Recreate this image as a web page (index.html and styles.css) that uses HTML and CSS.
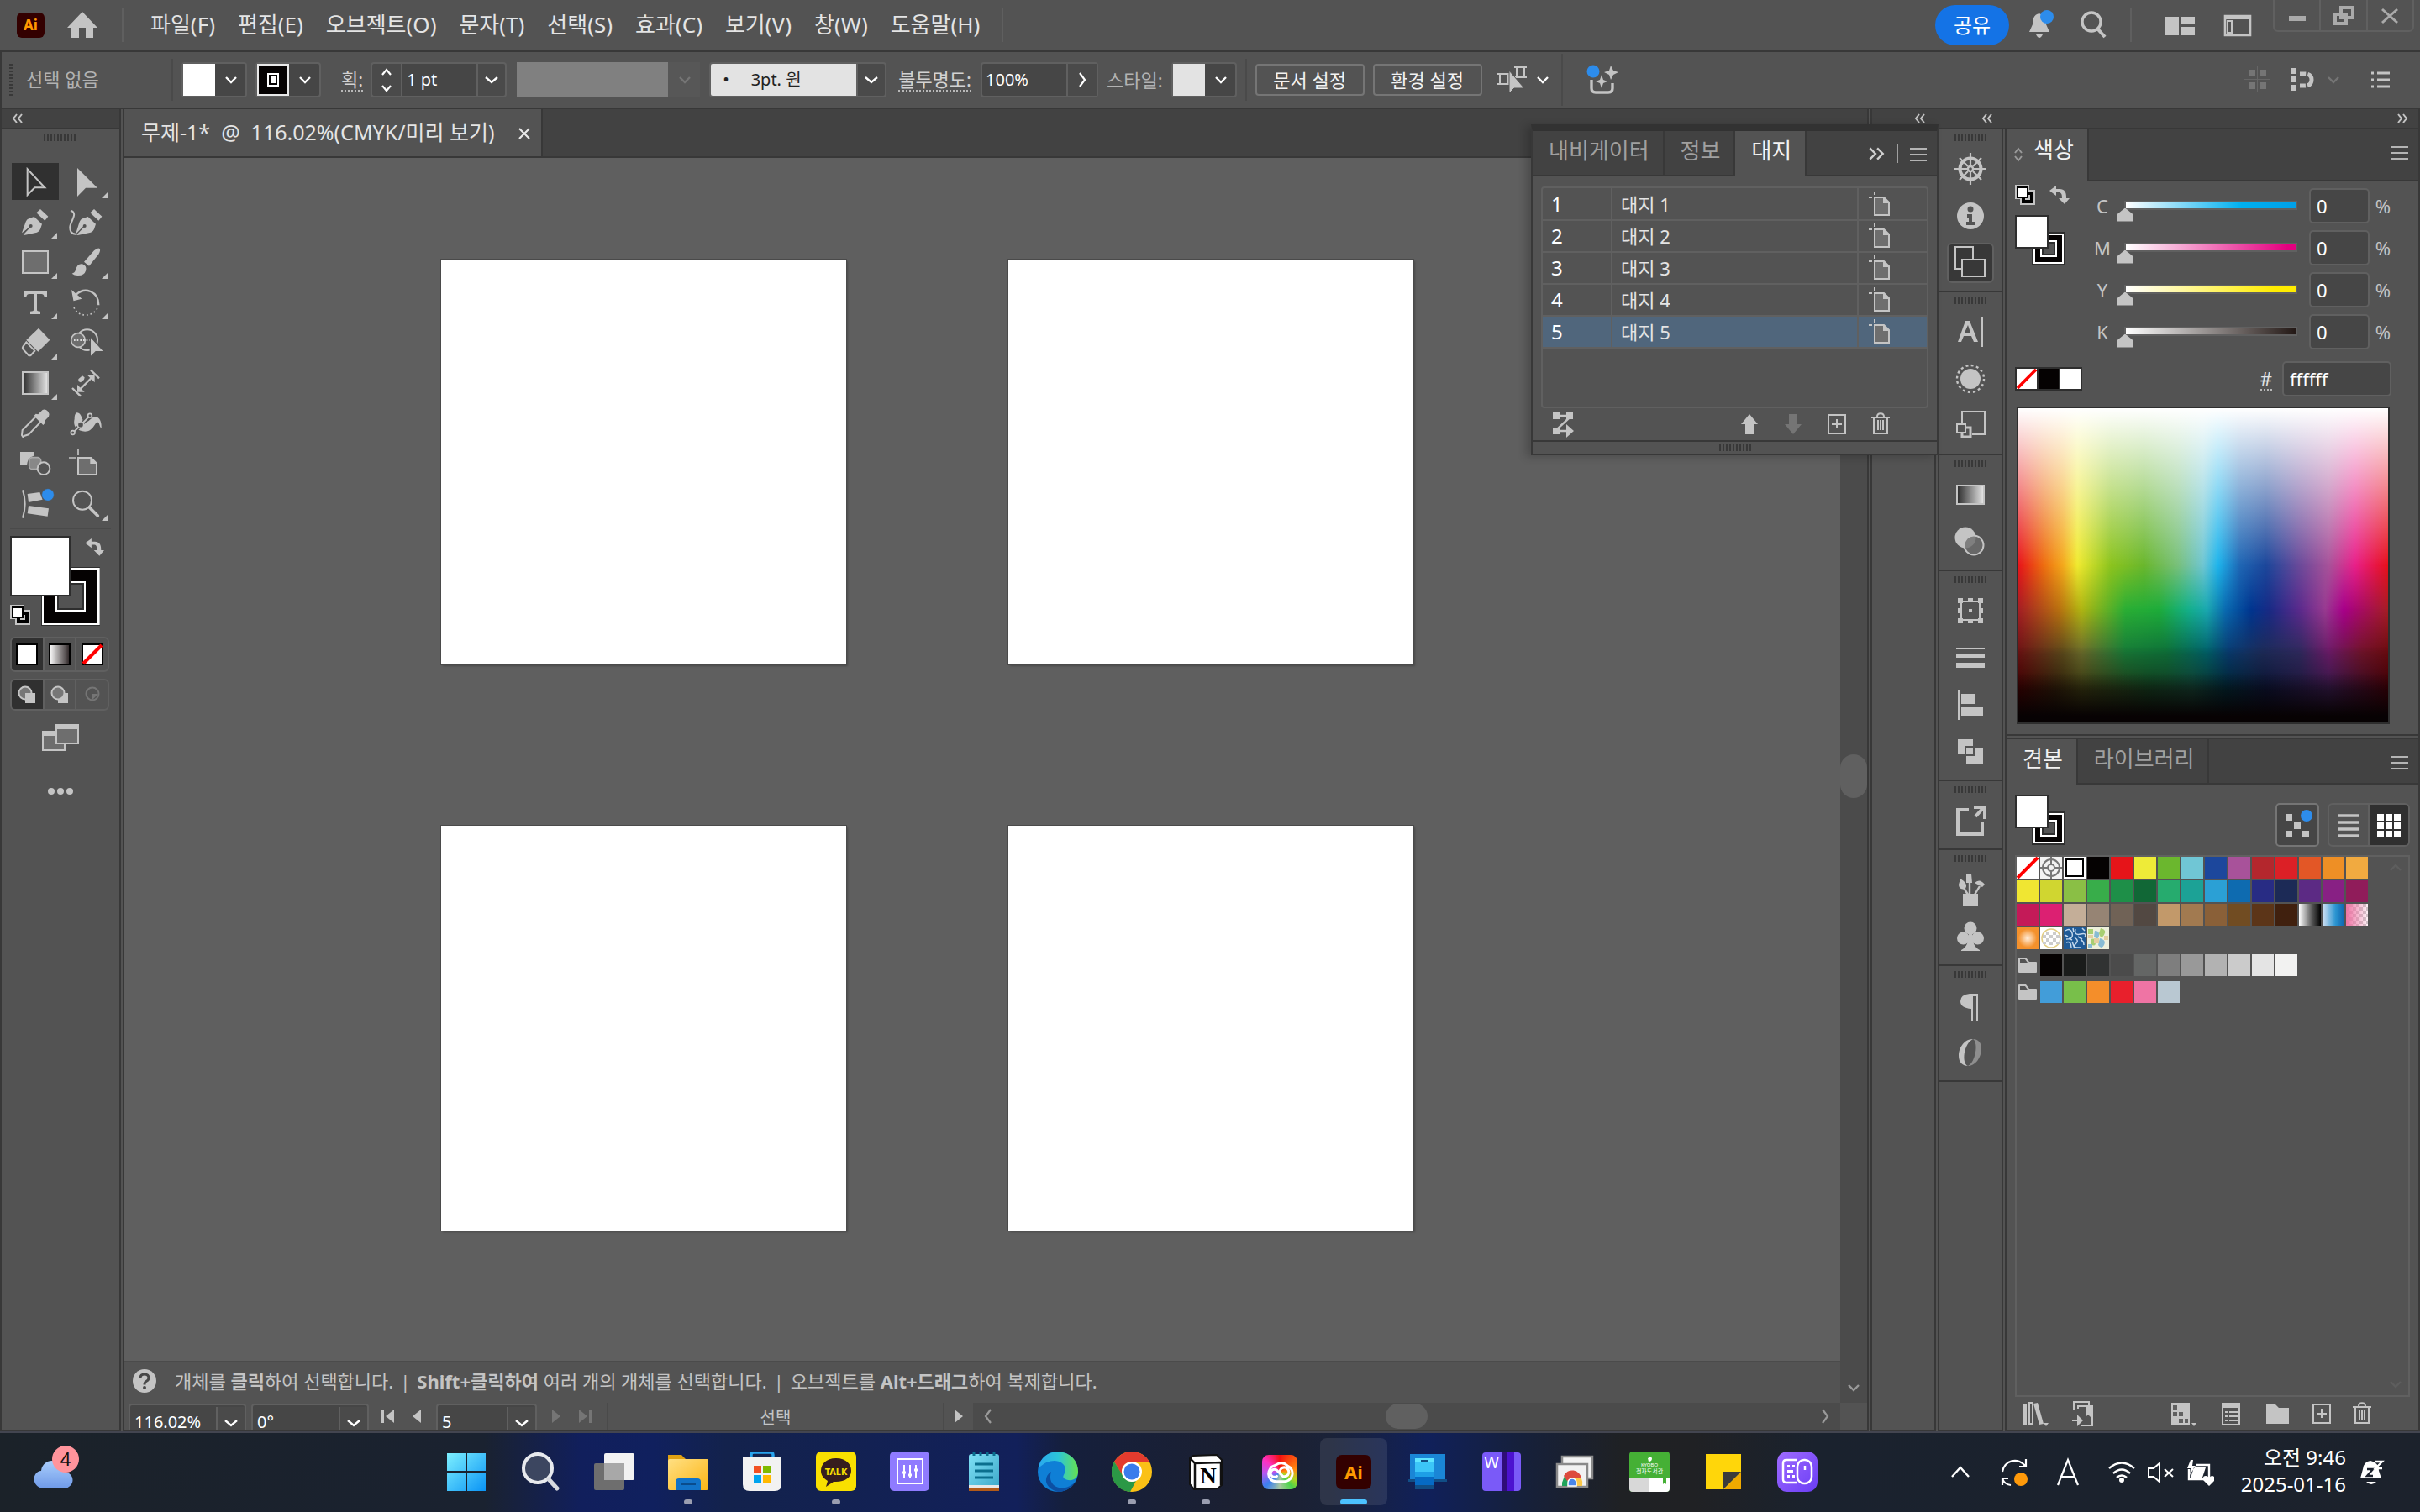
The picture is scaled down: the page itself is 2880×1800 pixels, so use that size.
FILE: index.html
```html
<!DOCTYPE html>
<html lang="ko">
<head>
<meta charset="utf-8">
<title>무제-1* - Illustrator</title>
<link rel="stylesheet" href="styles.css">
</head>
<body>
<svg class="sprite" aria-hidden="true">
  <defs>
    <linearGradient id="gw"><stop offset="0" stop-color="#2a2a2a"/><stop offset="1" stop-color="#e8e8e8"/></linearGradient>
    <linearGradient id="gb"><stop offset="0" stop-color="#fff"/><stop offset="1" stop-color="#2a2223"/></linearGradient>
    <linearGradient id="win" x2="1" y2="1"><stop offset="0" stop-color="#7df0ff"/><stop offset="1" stop-color="#0a94f5"/></linearGradient>
    <linearGradient id="fold" x2="1" y2="1"><stop offset="0" stop-color="#ffe083"/><stop offset="1" stop-color="#fdb515"/></linearGradient>
    <linearGradient id="cloud" x2="0" y2="1"><stop offset="0" stop-color="#a9cdfb"/><stop offset="1" stop-color="#6f9ae8"/></linearGradient>
    <linearGradient id="edge" x2="1"><stop offset="0" stop-color="#2aa8ee"/><stop offset=".5" stop-color="#2cc5d8"/><stop offset="1" stop-color="#66e24f"/></linearGradient>
    <linearGradient id="pur" x2="1" y2="1"><stop offset="0" stop-color="#a06cff"/><stop offset="1" stop-color="#6a3df5"/></linearGradient>
    <linearGradient id="note" x2="1" y2="1"><stop offset="0" stop-color="#7fe0f5"/><stop offset="1" stop-color="#3aa6c8"/></linearGradient>
  </defs>
  <symbol id="down" viewBox="0 0 20 20"><path d="M4 7l6 6 6-6" fill="none" stroke="currentColor" stroke-width="2.4"/></symbol>
  <symbol id="right" viewBox="0 0 20 20"><path d="M7 2l6 8-6 8" fill="none" stroke="currentColor" stroke-width="2.2"/></symbol>
  <symbol id="dbl-right" viewBox="0 0 20 20"><path d="M3 4l6 6-6 6M11 4l6 6-6 6" fill="none" stroke="currentColor" stroke-width="2.2"/></symbol>
  <symbol id="dbl-left" viewBox="0 0 14 14"><path d="M6 2L2 7l4 5M12 2L8 7l4 5" fill="none" stroke="currentColor" stroke-width="2"/></symbol>
  <symbol id="menu" viewBox="0 0 20 16"><path d="M0 1h20M0 8h20M0 15h20" stroke="currentColor" stroke-width="2"/></symbol>
  <symbol id="swap" viewBox="0 0 24 24"><path d="M8 1v4h4c6 0 8 4 8 9v2h4l-6 7-7-7h4c0-5-1-7-4-7H8v4L0 7z" fill="#c4c4c4"/></symbol>
  <symbol id="defcol" viewBox="0 0 24 24"><path d="M0 0h17v6h7v18H6v-7H0z" fill="#c4c4c4"/><path d="M8 8h14v14H8z"/><path d="M12 12h6v6h-6z" fill="#c4c4c4"/><path d="M2 2h14v14H2z"/><path d="M4 4h10v10H4z" fill="#fff"/></symbol>
  <symbol id="trash" viewBox="0 0 24 28"><path d="M1 6h22M8 5c0-5 8-5 8 0M4 6v19h16V6M9 9v12M12 9v12M15 9v12" fill="none" stroke="#c4c4c4" stroke-width="2"/></symbol>
  <symbol id="plus" viewBox="0 0 24 28"><path d="M2 3h20v22H2zM12 8v11M6 14h12" fill="none" stroke="#c4c4c4" stroke-width="2"/></symbol>
  <symbol id="board" viewBox="0 0 26 30"><path d="M7 0v4M0 7h4" stroke="#c4c4c4" stroke-width="2"/><path d="M7 7h11l6 6v15H7z" fill="#6e6e6e" stroke="#c4c4c4" stroke-width="2"/><path d="M17 6v8h8z" fill="#c4c4c4"/></symbol>
  <symbol id="folder" viewBox="0 0 26 26"><path d="M2 5q0-1 1-1h8l4 5h8q1 0 1 1v11q0 1-1 1H3q-1 0-1-1z" fill="#c4c4c4"/><path d="M4 6h6l3 4H4z" fill="#535353"/></symbol>
  <symbol id="nopaint" viewBox="0 0 26 26"><path d="M0 0h26v26H0z" fill="#fff"/><path d="M1 25L25 1" stroke="#f00" stroke-width="4"/></symbol>
</svg>

<header class="menubar">
  <span class="ai-logo">Ai</span>
  <button class="home" aria-label="홈"><svg viewBox="0 0 36 32"><path d="M18 0l18 19h-5v12h-9V19h-8v12H5V19H0z" fill="#c4c4c4"/></svg></button>
  <nav class="menus">
    <button>파일(F)</button><button>편집(E)</button><button>오브젝트(O)</button><button>문자(T)</button><button>선택(S)</button><button>효과(C)</button><button>보기(V)</button><button>창(W)</button><button>도움말(H)</button>
  </nav>
  <div class="menu-right">
    <button class="share">공유</button>
    <button class="ic bell" aria-label="알림"><svg viewBox="0 0 32 36"><path d="M14 4c-7 1-8 8-8 13L2 26h24l-4-9V9z" fill="#c4c4c4"/><path d="M10 29h8q-4 8-8 0z" fill="#c4c4c4"/><circle cx="23" cy="8" r="8" fill="#2d8ceb"/></svg></button>
    <button class="ic" aria-label="검색"><svg viewBox="0 0 32 36"><circle cx="14" cy="14" r="11" fill="none" stroke="#c4c4c4" stroke-width="3.4"/><path d="M21 22l9 10" stroke="#c4c4c4" stroke-width="4"/></svg></button>
    <i class="vline"></i>
    <button class="ic" aria-label="작업 영역"><svg viewBox="0 0 36 36"><path d="M0 8h16v22H0zM18 8h17v9H18zM18 20h17v10H18z" fill="#c4c4c4"/></svg></button>
    <button class="ic" aria-label="패널"><svg viewBox="0 0 36 36"><path d="M3 7h30v23H3z" fill="none" stroke="#c4c4c4" stroke-width="2.6"/><path d="M2 6h32v5H2z" fill="#c4c4c4"/><path d="M6 13h5v14H6z" fill="none" stroke="#c4c4c4" stroke-width="2"/></svg></button>
    <div class="winbtns">
      <button aria-label="최소화"><svg viewBox="0 0 30 30"><path d="M5 16h20v6H5z" fill="#aaa"/></svg></button>
      <button aria-label="복원"><svg viewBox="0 0 30 30"><path d="M12 6h14v12H12zM5 14h13v11H5z" fill="none" stroke="#aaa" stroke-width="4"/></svg></button>
      <button aria-label="닫기"><svg viewBox="0 0 30 30"><path d="M6 8l18 16M24 8L6 24" stroke="#aaa" stroke-width="3"/></svg></button>
    </div>
  </div>
</header>

<section class="controlbar">
  <i class="dots"></i>
  <span class="sel-none">선택 없음</span>
  <i class="vdiv"></i>
  <button class="pick" aria-label="칠"><i class="chip white"></i><svg><use href="#down"/></svg></button>
  <button class="pick" aria-label="획 색"><i class="chip stroke"></i><svg><use href="#down"/></svg></button>
  <label class="lbl under" for="sw">획:</label>
  <div class="spin"><span class="arrows"><svg viewBox="0 0 20 32"><path d="M5 10l5-6 5 6M5 23l5 6 5-6" fill="none" stroke="#fff" stroke-width="2.2"/></svg></span><select id="sw" class="combo w-pt"><option>1 pt</option></select></div>
  <div class="profile"><svg><use href="#down"/></svg></div>
  <select class="combo w-brush" aria-label="브러쉬"><option>•&nbsp;&nbsp;&nbsp;&nbsp; 3pt. 원</option></select>
  <label class="lbl under" for="op">불투명도:</label>
  <div class="opacity"><input id="op" value="100%"><button aria-label="더 보기"><svg><use href="#right"/></svg></button></div>
  <span class="lbl dim">스타일:</span>
  <button class="pick" aria-label="스타일"><i class="chip pale"></i><svg><use href="#down"/></svg></button>
  <i class="vdiv"></i>
  <button class="outline">문서 설정</button>
  <button class="outline">환경 설정</button>
  <button class="ic simil" aria-label="유사 항목"><svg viewBox="0 0 36 36"><path d="M3 11h10v12H3zM23 3h9v12h-9zM0 11h3M0 23h3M20 3h15M20 15h15" fill="none" stroke="#c4c4c4" stroke-width="2"/><path d="M14 7v27l6-6h12z" fill="#c4c4c4" stroke="#535353" stroke-width="1"/></svg><svg class="sm"><use href="#down"/></svg></button>
  <i class="vdiv tall"></i>
  <button class="ic gen" aria-label="생성"><svg viewBox="0 0 40 36"><path d="M6 18v10q0 5 5 5h15q5 0 5-5v-6" fill="none" stroke="#c4c4c4" stroke-width="3.4"/><path d="M29 1l3 6 6 2-6 3-3 6-2-6-6-3 6-2zM18 12l2 6 5 2-5 2-2 6-2-6-5-2 5-2z" fill="#c4c4c4"/><circle cx="8" cy="8" r="7.500" fill="#2d8ceb"/></svg></button>
  <div class="ctl-right">
    <svg class="dim" viewBox="0 0 32 32"><path d="M5 4h8v8H5zM18 4h8v8h-8zM5 19h8v8H5zM18 19h8v8h-8z" fill="#757575"/><path d="M0 15h31v1H0zM15 0h1v31h-1z" fill="#666"/></svg>
    <svg viewBox="0 0 32 32"><path d="M3 2h7v7H3zM3 12h7v7H3zM3 22h7v7H3z" fill="#c4c4c4"/><path d="M14 9h6q8 0 8 7t-8 7h-6" fill="none" stroke="#c4c4c4" stroke-width="5" stroke-dasharray="7 2 18 2"/></svg>
    <svg class="sm dimc"><use href="#down"/></svg>
    <svg class="lst" viewBox="0 0 24 24"><path d="M1 4h3M1 12h3M1 20h3M8 4h15M8 12h15M8 20h15" stroke="#c4c4c4" stroke-width="3"/></svg>
  </div>
</section>

<main class="work">
  <aside class="tools">
    <div class="strip-head left"><svg><use href="#dbl-left"/></svg></div>
    <i class="grip"></i>
    <div class="toolgrid">
      <button class="on" aria-label="선택"><svg viewBox="36 216 180 144"><path d="M98 244v92l26-26h36z" fill="none" stroke="#c4c4c4" stroke-width="6"/></svg></button>
      <button class="fly" aria-label="직접 선택"><svg viewBox="216 216 180 144"><path d="M276 240v102l30-31h42z" fill="#c4c4c4"/></svg></button>
      <button class="fly" aria-label="펜"><svg viewBox="36 360 180 144"><path d="M78 472l14-40q3-9 12-12l18-6 28 26-6 18q-3 9-12 12l-46 10-4-4 26-26" fill="#c4c4c4"/><path d="M82 476l26-27" stroke="#535353" stroke-width="4"/><circle cx="110" cy="447" r="6" fill="#535353"/><path d="M130 400l14-13 28 26-12 15z" fill="#c4c4c4"/></svg></button>
      <button aria-label="곡률"><svg viewBox="216 360 180 144"><path d="M252 392c28 8 0 38-2 58-1 14 4 26 20 26" fill="none" stroke="#c4c4c4" stroke-width="6"/><path d="M270 476l14-44q3-9 12-12l18-6 28 26-6 18q-3 9-12 12l-46 10z" fill="#c4c4c4"/><path d="M273 476l26-27" stroke="#535353" stroke-width="4"/><circle cx="302" cy="447" r="6" fill="#535353"/><path d="M322 400l14-13 28 26-12 15z" fill="#c4c4c4"/></svg></button>
      <button class="fly" aria-label="사각형"><svg viewBox="36 504 180 144"><path d="M81 537h90v78H81z" fill="#6e6e6e" stroke="#c4c4c4" stroke-width="6"/></svg></button>
      <button class="fly" aria-label="브러쉬"><svg viewBox="216 504 180 144"><path d="M356 528q4 6-4 20l-34 42-18-15 36-40q14-12 20-7z" fill="#c4c4c4"/><path d="M294 583q16 6 13 22-6 20-30 19-12 0-20-7 10-2 13-13 6-24 24-21z" fill="#c4c4c4"/></svg></button>
      <button class="fly" aria-label="문자"><svg viewBox="36 648 180 144"><path d="M84 678h84v22h-10q-2-10-10-10h-16v58q0 4 12 4v10h-36v-10q12 0 12-4v-58h-16q-8 0-10 10H84z" fill="#c4c4c4"/></svg></button>
      <button class="fly" aria-label="회전"><svg viewBox="216 648 180 144"><path d="M272 692c30-28 80-14 80 38" fill="none" stroke="#c4c4c4" stroke-width="7"/><path d="M258 680l30 26-24 6z" fill="#c4c4c4" stroke="#c4c4c4" stroke-width="4"/><path d="M264 738c14 36 68 36 84 2" fill="none" stroke="#c4c4c4" stroke-width="5" stroke-dasharray="5 9"/></svg></button>
      <button class="fly" aria-label="지우개"><svg viewBox="36 792 180 144"><path d="M138 812l40 42-42 42-42-42z" fill="#c4c4c4"/><path d="M94 862l30 31-14 16q-4 2-8 0l-20-22q-3-5 0-9z" fill="none" stroke="#c4c4c4" stroke-width="6"/></svg></button>
      <button aria-label="도형 구성"><svg viewBox="216 792 180 144"><circle cx="311" cy="854" r="37" fill="none" stroke="#c4c4c4" stroke-width="6"/><circle cx="279" cy="855" r="25" fill="#6e6e6e" stroke="#c4c4c4" stroke-width="5"/><path d="M264 855h64" stroke="#fff" stroke-width="5" stroke-dasharray="5 6"/><path d="M322 842v74l20-20h30z" fill="#c4c4c4" stroke="#535353" stroke-width="4"/></svg></button>
      <button class="fly" aria-label="그레이디언트"><svg viewBox="36 936 180 144"><path d="M81 969h90v78H81z" fill="url(#gw)" stroke="#c4c4c4" stroke-width="6"/></svg></button>
      <button aria-label="치수"><svg viewBox="216 936 180 144"><path d="M258 1026l30 29M324 962l30 29M286 1030l40-40" stroke="#c4c4c4" stroke-width="7"/><path d="M276 1040v-26l26 26zM338 978v28l-28-28zM280 994l14-12 8 6-2 8-12 10-8-4z" fill="#c4c4c4"/></svg></button>
      <button aria-label="스포이드"><svg viewBox="36 1080 180 144"><path d="M128 1128l18 18-44 46-14 4-6 4-4-6 2-18z" fill="none" stroke="#c4c4c4" stroke-width="6"/><path d="M122 1124l6-6 8 2 16-16q10-4 20 6 6 8 2 18l-14 14 2 8-8 8z" fill="#c4c4c4"/></svg></button>
      <button aria-label="퍼펫 뒤틀기"><svg viewBox="216 1080 180 144"><path d="M266 1136c0-36 22-22 26-4 4 14 16 20 28 8 20-22 44-12 42 30-8-6-6-24-16-22-8 2-16 40-52 32-22-4-34-20-28-44z" fill="#c4c4c4"/><path d="M262 1184l60-60" stroke="#535353" stroke-width="14"/><path d="M262 1184l60-60" stroke="#c4c4c4" stroke-width="6"/><circle cx="260" cy="1185" r="7" fill="#535353" stroke="#c4c4c4" stroke-width="5"/><circle cx="288" cy="1157" r="11" fill="#535353" stroke="#c4c4c4" stroke-width="5"/><circle cx="321" cy="1124" r="7" fill="#535353" stroke="#c4c4c4" stroke-width="5"/></svg></button>
      <button aria-label="블렌드"><svg viewBox="36 1224 180 144"><path d="M72 1254h48v14q-22 6-24 34H72z" fill="#c4c4c4"/><rect x="104" y="1274" width="42" height="42" rx="12" fill="#888" stroke="#aaa" stroke-width="5"/><circle cx="156" cy="1313" r="22" fill="#535353" stroke="#c4c4c4" stroke-width="6"/></svg></button>
      <button aria-label="대지"><svg viewBox="216 1224 180 144"><path d="M279 1242v24M246 1275h24" stroke="#c4c4c4" stroke-width="5"/><path d="M279 1275h46l20 20v40h-66z" fill="#6e6e6e" stroke="#c4c4c4" stroke-width="6"/><path d="M322 1272v24h26z" fill="#c4c4c4"/></svg></button>
      <button aria-label="교차"><svg viewBox="36 1368 180 144"><path d="M81 1390q16 48 0 100" fill="none" stroke="#c4c4c4" stroke-width="6"/><path d="M98 1404l44-6 10 26-50 10zM102 1446l72 10-4 28-72-10z" fill="#c4c4c4"/><circle cx="171" cy="1407" r="22" fill="#2d8ceb" stroke="#535353" stroke-width="2"/></svg></button>
      <button class="fly" aria-label="돋보기"><svg viewBox="216 1368 180 144"><circle cx="294" cy="1427" r="33" fill="none" stroke="#c4c4c4" stroke-width="6"/><path d="M319 1452l30 30" stroke="#c4c4c4" stroke-width="11" stroke-linecap="round"/></svg></button>
    </div>
    <div class="colors">
      <svg viewBox="36 228 360 336"><path d="M147 345h210v210H147z" fill="#2e2e2e"/><path d="M150 348h206v204H150z" fill="#fff"/><path d="M156 354h192v192H156z" fill="#050202"/><path d="M198 396h108v108H198z" fill="#fff"/><path d="M204 402h96v96h-96z" fill="#2e2e2e"/><path d="M210 408h84v84h-84z" fill="#535353"/><path d="M36 234h216v216H36z" fill="#2e2e2e"/><path d="M42 240h204v204H42z" fill="#fff"/><use href="#swap" x="303" y="240" width="70" height="68"/><use href="#defcol" x="36" y="480" width="72" height="72"/></svg>
    </div>
    <div class="seg c1">
      <button class="on" aria-label="색상"><svg viewBox="0 0 26 26"><path d="M1 1h24v24H1z" fill="#fff" stroke="#000" stroke-width="2"/></svg></button>
      <button aria-label="그레이디언트"><svg viewBox="0 0 26 26"><path d="M1 1h24v24H1z" fill="url(#gb)" stroke="#000" stroke-width="2"/></svg></button>
      <button aria-label="없음"><svg viewBox="0 0 26 26"><path d="M1 1h24v24H1z" fill="#fff" stroke="#000" stroke-width="2"/><path d="M2 24L24 2" stroke="#f00" stroke-width="4"/></svg></button>
    </div>
    <div class="seg c2">
      <button class="on" aria-label="표준 그리기"><svg viewBox="0 0 22 22"><circle cx="9" cy="9" r="7.500" fill="#777" stroke="#c4c4c4" stroke-width="2"/><path d="M9 9h12v12H9z" fill="#c4c4c4"/></svg></button>
      <button aria-label="배경 그리기"><svg viewBox="0 0 22 22"><path d="M9 9h12v12H9z" fill="#c4c4c4"/><circle cx="9" cy="9" r="7.500" fill="#777" stroke="#c4c4c4" stroke-width="2"/></svg></button>
      <button aria-label="내부 그리기"><svg viewBox="0 0 22 22"><circle cx="11" cy="10" r="7.500" fill="none" stroke="#757575" stroke-width="2"/><path d="M11 10h7l-7 7z" fill="#757575"/></svg></button>
    </div>
    <button class="screen" aria-label="화면 모드"><svg viewBox="0 0 44 32"><path d="M1 9h26v22H1z" fill="#6e6e6e" stroke="#c4c4c4" stroke-width="2"/><path d="M0 8h17v6H0z" fill="#c4c4c4"/><path d="M17 1h26v22H17z" fill="#6e6e6e" stroke="#c4c4c4" stroke-width="2"/><path d="M16 0h28v6H16z" fill="#c4c4c4"/></svg></button>
    <button class="more" aria-label="도구 모음 편집"><svg viewBox="0 0 30 8"><circle cx="4" cy="4" r="4"/><circle cx="15" cy="4" r="4"/><circle cx="26" cy="4" r="4"/></svg></button>
  </aside>

  <section class="doc">
    <div class="tabs"><div class="doctab"><span>무제-1*&nbsp; @&nbsp; 116.02%(CMYK/미리 보기)</span><button aria-label="탭 닫기"><svg viewBox="0 0 14 14"><path d="M1 1l12 12M13 1L1 13" stroke="#e8e8e8" stroke-width="2.2"/></svg></button></div></div>
    <div class="docbody">
      <div class="canvascol">
        <div class="canvas"><i></i><i></i><i></i><i></i></div>
        <p class="hint"><svg viewBox="0 0 28 28"><circle cx="14" cy="14" r="14" fill="#c4c4c4"/><path d="M9 10.500q0-4.500 5-4.500t5 4.500q0 2.500-3 4-2 1-2 4" fill="none" stroke="#484848" stroke-width="3"/><circle cx="14" cy="22" r="2" fill="#484848"/></svg><span>개체를 <b>클릭</b>하여 선택합니다.</span><span>|</span><span><b>Shift+클릭하여</b> 여러 개의 개체를 선택합니다.</span><span>|</span><span>오브젝트를 <b>Alt+드래그</b>하여 복제합니다.</span></p>
      </div>
      <div class="vscroll"><i class="thumb"></i><svg><use href="#down"/></svg></div>
    </div>
    <div class="status">
      <select class="combo w-zoom" aria-label="확대"><option>116.02%</option></select>
      <select class="combo w-zoom" aria-label="회전"><option>0°</option></select>
      <button class="nav" aria-label="처음"><svg viewBox="0 0 20 20"><path d="M2 2h3v16H2zM17 2v16L7 10z"/></svg></button>
      <button class="nav" aria-label="이전"><svg viewBox="0 0 20 20"><path d="M15 2v16L5 10z"/></svg></button>
      <select class="combo w-page" aria-label="대지 탐색"><option>5</option></select>
      <button class="nav off" aria-label="다음"><svg viewBox="0 0 20 20"><path d="M5 2v16l10-8z"/></svg></button>
      <button class="nav off" aria-label="마지막"><svg viewBox="0 0 20 20"><path d="M15 2h3v16h-3zM3 2v16l10-8z"/></svg></button>
      <span class="toolname">선택</span>
      <button class="nav play" aria-label="상태 메뉴"><svg viewBox="0 0 20 20"><path d="M5 2v16l10-8z"/></svg></button>
      <div class="hscroll"><svg class="flip"><use href="#right"/></svg><i class="thumb"></i><svg><use href="#right"/></svg></div>
    </div>
  </section>

  <section class="side">
    <div class="strip-head heads"><svg><use href="#dbl-left"/></svg><svg><use href="#dbl-left"/></svg><svg class="flip"><use href="#dbl-left"/></svg></div>
    <div class="cols">
      <div class="col empty"></div>
      <div class="col dock">
        <div class="grp"><i class="grip"></i>
          <button aria-label="내비게이터"><svg viewBox="-28 -28 56 56"><g fill="none" stroke="#c4c4c4"><circle r="12.500" stroke-width="4"/><circle r="3" stroke-width="2.400"/><path d="M0-19V-4M0 4V19M-19 0H-4M4 0H19M-13-13L-3-3M13-13L3-3M-13 13l10-10M13 13L3 3" stroke-width="2.200"/></g></svg></button>
          <button aria-label="정보"><svg viewBox="-28 -28 56 56"><circle r="16" fill="#c4c4c4"/><circle cy="-8" r="3.500" fill="#535353"/><path d="M-4-2h6v9h3v4H-5V7h3V2h-2z" fill="#535353"/></svg></button>
          <button class="on" aria-label="대지"><svg viewBox="-28 -28 56 56"><path d="M-9 7h-9v-26H3v15" fill="none" stroke="#c4c4c4" stroke-width="2"/><path d="M-10-4h27v20h-27z" fill="none" stroke="#c4c4c4" stroke-width="2"/></svg></button></div>
        <div class="grp"><i class="grip"></i>
          <button aria-label="문자"><svg viewBox="-28 -28 56 56"><path d="M-15 12L-6-13h5L9 12H4L1 5h-9l-3 7zM-7 1h7l-3-9zM13-18h2v36h-2z" fill="#c4c4c4" fill-rule="evenodd"/></svg></button>
          <button aria-label="모양"><svg viewBox="-28 -28 56 56"><circle r="12" fill="#c4c4c4"/><circle r="16" fill="none" stroke="#c4c4c4" stroke-width="2.400" stroke-dasharray="3 3.300"/></svg></button>
          <button aria-label="에셋"><svg viewBox="-28 -28 56 56"><path d="M-10-2v-15h27v27H2" fill="none" stroke="#c4c4c4" stroke-width="2"/><path d="M-16-2h10V8h-10z" fill="#535353" stroke="#c4c4c4" stroke-width="2"/><path d="M-10 8v5H0V2h-5" fill="none" stroke="#c4c4c4" stroke-width="3"/></svg></button></div>
        <div class="grp"><i class="grip"></i>
          <button aria-label="그레이디언트"><svg viewBox="-28 -28 56 56"><path d="M-16-11h32v22h-32z" fill="url(#gw)" stroke="#c4c4c4" stroke-width="2"/></svg></button>
          <button aria-label="투명도"><svg viewBox="-28 -28 56 56"><circle cx="-6" cy="-5" r="12.500" fill="#c4c4c4"/><circle cx="4" cy="4" r="11.500" fill="#6e6e6e" fill-opacity=".8" stroke="#c4c4c4" stroke-width="2"/></svg></button></div>
        <div class="grp"><i class="grip"></i>
          <button aria-label="변형"><svg viewBox="-28 -28 56 56"><path d="M-11-11h22v22h-22z" fill="none" stroke="#c4c4c4" stroke-width="2"/><path d="M-15-15h6v6h-6zM-3-15h6v4h-6zM9-15h6v6H9zM-15-3h4v6h-4zM11-3h4v6h-4zM-15 9h6v6h-6zM-3 11h6v4h-6zM9 9h6v6H9zM-2-2h4v4h-4z" fill="#c4c4c4"/></svg></button>
          <button aria-label="획"><svg viewBox="-28 -28 56 56"><path d="M-17-12h34v2h-34zM-17-4h34v4h-34zM-17 6h34v6h-34z" fill="#c4c4c4"/></svg></button>
          <button aria-label="정렬"><svg viewBox="-28 -28 56 56"><path d="M-15-18h2v36h-2zM-11-13H5V-1h-16zM-11 3h26v10h-26z" fill="#c4c4c4"/></svg></button>
          <button aria-label="패스파인더"><svg viewBox="-28 -28 56 56"><path d="M-15-15H3v8h-10V3h-8zM5-5h10v20H-5V5H5zM-5-5H3V3h-8z" fill="#c4c4c4"/></svg></button></div>
        <div class="grp"><i class="grip"></i>
          <button aria-label="내보내기"><svg viewBox="-28 -28 56 56"><path d="M-2-13h-13v29h29V2" fill="none" stroke="#c4c4c4" stroke-width="4"/><path d="M6-5L15-15M4-16h13V-2" fill="none" stroke="#c4c4c4" stroke-width="4"/></svg></button></div>
        <div class="grp"><i class="grip"></i>
          <button aria-label="브러쉬"><svg viewBox="-28 -28 56 56"><path d="M-9 5H9v14H-9zM-12-13q10 6 6 12-8 2-8-5zM-5-19h6l1 11h-7zM5-8q6-6 12 2l-3 3z" fill="#c4c4c4"/><path d="M-8-2l5 8M-1-8V6M11-4L5 6" stroke="#c4c4c4" stroke-width="2.400"/></svg></button>
          <button aria-label="심볼"><svg viewBox="-28 -28 56 56"><circle cy="-10" r="7.500" fill="#c4c4c4"/><circle cx="-8.500" cy="2" r="7.500" fill="#c4c4c4"/><circle cx="8.500" cy="2" r="7.500" fill="#c4c4c4"/><path d="M-2-4h4q0 16 9 20v1h-22v-1q9-4 9-20z" fill="#c4c4c4"/></svg></button></div>
        <div class="grp"><i class="grip"></i>
          <button aria-label="단락"><svg viewBox="-28 -28 56 56"><path d="M9-14v32H7v-29H3v29H1V4q-13-1-13-9t11-9z" fill="#c4c4c4"/></svg></button>
          <button aria-label="OpenType"><svg viewBox="-28 -28 56 56"><path d="M3-16C-8-16-14-5-14 4-14 12-9 16-3 16-11 13-8-11 3-16z" fill="#c4c4c4"/><path d="M3-16C9-16 13-12 13-5 13 6 6 16-3 16 6 12 10-12 3-16z" fill="#8e8e8e"/></svg></button></div>
      </div>
      <div class="col panels">
        <section class="panel">
          <div class="ptabs"><button class="on color"><svg viewBox="0 0 12 18"><path d="M2 7l4-5 4 5M2 11l4 5 4-5" fill="none" stroke="#9a9a9a" stroke-width="2"/></svg>색상</button><svg class="pm"><use href="#menu"/></svg></div>
          <div class="colorbody">
            <div class="csel">
              <div class="row"><svg><use href="#defcol"/></svg><svg><use href="#swap"/></svg></div>
              <svg class="fs" viewBox="0 0 60 60"><use href="#fsicon"/></svg>
            </div>
            <div class="sliders">
              <label for="c">C</label><input class="rg c" type="range" value="0" aria-label="C 값"><input id="c" value="0"><span>%</span>
              <label for="m">M</label><input class="rg m" type="range" value="0" aria-label="M 값"><input id="m" value="0"><span>%</span>
              <label for="y">Y</label><input class="rg y" type="range" value="0" aria-label="Y 값"><input id="y" value="0"><span>%</span>
              <label for="k">K</label><input class="rg k" type="range" value="0" aria-label="K 값"><input id="k" value="0"><span>%</span>
            </div>
          </div>
          <div class="hexrow"><div class="trio"><svg><use href="#nopaint"/></svg><i class="bk"></i><i class="wh"></i></div><label class="under" for="hex">#</label><input id="hex" value="ffffff"></div>
          <div class="spectrum"><i class="s1"></i><i class="s2"></i><i class="s3"></i><i class="s4"></i><i class="s5"></i></div>
        </section>
        <section class="panel swpanel">
          <div class="ptabs"><button class="on">견본</button><button>라이브러리</button><svg class="pm"><use href="#menu"/></svg></div>
          <div class="swtop">
            <svg class="fs" viewBox="0 0 60 60"><g id="fsicon"><path d="M20 20h40v40H20z" fill="#2e2e2e"/><path d="M22 22h36v36H22z" fill="#fff"/><path d="M24 24h32v32H24z" fill="#050202"/><path d="M30 30h20v20H30z" fill="#fff"/><path d="M32 32h16v16H32z" fill="#2e2e2e"/><path d="M34 34h12v12H34z" fill="#535353"/><path d="M0 0h40v40H0z" fill="#2e2e2e"/><path d="M2 2h36v36H2z" fill="#fff"/></g></svg>
            <button class="find" aria-label="견본 찾기"><svg viewBox="0 0 48 48"><path d="M10 11h8v8h-8zM20 21h8v8h-8zM10 31h8v8h-8zM30 31h8v8h-8z" fill="#c4c4c4"/><circle cx="35" cy="13" r="7" fill="#2d8ceb"/></svg></button>
            <div class="seg c3"><button aria-label="목록 보기"><svg viewBox="0 0 28 32"><path d="M2 5h24M2 13h24M2 21h24M2 29h24" stroke="#c4c4c4" stroke-width="3.600"/></svg></button><button class="on" aria-label="격자 보기"><svg viewBox="0 0 28 32"><path d="M0 3h8v8H0zM10 3h8v8h-8zM20 3h8v8h-8zM0 13h8v8H0zM10 13h8v8h-8zM20 13h8v8h-8zM0 23h8v8H0zM10 23h8v8h-8zM20 23h8v8h-8z" fill="#fff"/></svg></button></div>
          </div>
          <div class="swlist">
            <div class="swarea">
            <div class="sw">
              <svg><use href="#nopaint"/></svg>
              <svg viewBox="0 0 26 26"><path d="M0 0h26v26H0z" fill="#f2f2f2"/><g fill="none" stroke="#777" stroke-width="2"><circle cx="13" cy="13" r="10"/><circle cx="13" cy="13" r="4"/><path d="M13 0v10M13 16v10M0 13h10M16 13h10"/></g></svg>
              <svg viewBox="0 0 26 26"><path d="M0 0h26v26H0z" fill="#fff"/><path d="M3 3h20v20H3z" fill="#fff" stroke="#000" stroke-width="2"/></svg>
              <i style="background:#050202"></i><i style="background:#e61419"></i><i style="background:#eeeb38"></i><i style="background:#6bb72e"></i><i style="background:#70c6d5"></i><i style="background:#1c479c"></i><i style="background:#a8529a"></i><i style="background:#b4272d"></i><i style="background:#dc2026"></i><i style="background:#e35726"></i><i style="background:#ee8f25"></i><i style="background:#f1aa40"></i>
              <i style="background:#f0e632"></i><i style="background:#d0d630"></i><i style="background:#8abf45"></i><i style="background:#38ad4a"></i><i style="background:#1e8f48"></i><i style="background:#116736"></i><i style="background:#26ab6e"></i><i style="background:#1ca296"></i><i style="background:#2ba0d5"></i><i style="background:#0e6bb0"></i><i style="background:#282c84"></i><i style="background:#1c2a56"></i><i style="background:#5c2a84"></i><i style="background:#882084"></i><i style="background:#901c5a"></i>
              <i style="background:#c41a58"></i><i style="background:#dc2072"></i><i style="background:#c4ae98"></i><i style="background:#968474"></i><i style="background:#706256"></i><i style="background:#524842"></i><i style="background:#c2996a"></i><i style="background:#a27a50"></i><i style="background:#8a6038"></i><i style="background:#714c22"></i><i style="background:#5c3518"></i><i style="background:#40200e"></i><i class="gr1"></i><i class="gr2"></i><i class="gr3"></i>
              <i class="gr4"></i>
              <svg viewBox="0 0 26 26"><path d="M0 0h26v26H0z" fill="#fff"/><circle cx="13" cy="13" r="11" fill="#fff" stroke="#e2cd83" stroke-width="1.500"/><path d="M7 5h4v4H7zM15 5h4v4h-4zM3 9h4v4H3zM11 9h4v4h-4zM19 9h4v4h-4zM7 13h4v4H7zM15 13h4v4h-4zM3 17h4v3H3zM11 17h4v4h-4zM19 17h4v3h-4z" fill="#ccc"/></svg>
              <svg viewBox="0 0 26 26"><path d="M0 0h26v26H0z" fill="#1f5a96"/><path d="M2 4q6-4 8 3t-7 7M14 2q-2 8 6 6t5 4M3 18q6-2 6 6M13 12q6 4 1 8t6 4M20 15q4 1 4 6M1 9l4 2M11 1l1 5M22 1l3 3M10 17l3 8M17 11l5 3M6 13l4 2" fill="none" stroke="#c4d8ec" stroke-width="1.500"/></svg>
              <svg viewBox="0 0 26 26"><path d="M0 0h26v26H0z" fill="#eef0dc"/><path d="M1 2h6v6H1zM16 1q8 2 4 8t-6-2zM4 14q6-2 6 4t-6 2z" fill="#a8cf72"/><path d="M9 4q6 0 5 6t-6 1zM15 13q8 2 5 8t-7 0zM1 20h5v5H1z" fill="#88bcd4"/><path d="M8 13h6v6H8zM20 10h5v5h-5zM1 9h6v4H1z" fill="#e4cfa0"/></svg>
            </div>
            <div class="sw group"><svg><use href="#folder"/></svg><i style="background:#050202"></i><i style="background:#1a1c1b"></i><i style="background:#313333"></i><i style="background:#4b4b4b"></i><i style="background:#646665"></i><i style="background:#7e7e7e"></i><i style="background:#999"></i><i style="background:#b2b2b2"></i><i style="background:#cbcbcb"></i><i style="background:#e4e4e4"></i><i style="background:#f2f2f1"></i></div>
            <div class="sw group"><svg><use href="#folder"/></svg><i style="background:#429dd9"></i><i style="background:#78bf4a"></i><i style="background:#f48e2a"></i><i style="background:#e8202c"></i><i style="background:#ef74a4"></i><i style="background:#b9c8d2"></i></div>
            </div>
            <div class="swbar"><svg class="up"><use href="#down"/></svg><svg><use href="#down"/></svg></div>
          </div>
          <div class="swfoot">
            <svg viewBox="0 0 32 32"><path d="M1 5h4v24H1zM13 4l5-1 7 25-5 1z" fill="#c4c4c4"/><path d="M8 3h4v25H8z" fill="none" stroke="#c4c4c4" stroke-width="2"/><path d="M25 27h6l-3 4z" fill="#c4c4c4"/></svg>
            <svg viewBox="0 0 28 32"><path d="M3 12V2h18v4M8 10V7h17v23H12" fill="none" stroke="#c4c4c4" stroke-width="2"/><path d="M17 8h6v12l-3-3-3 3zM1 23h6v-6l7 7-7 7v-6H1z" fill="#c4c4c4"/></svg>
            <i class="gap"></i>
            <svg viewBox="0 0 32 32"><path d="M1 3h22v26H1z" fill="#c4c4c4"/><path d="M3 6h5v5H3zM3 14h5v5H3zM10 22h5v5h-5zM17 22h4v5h-4zM10 14h5v5h-5z" fill="#606060"/><path d="M25 27h6l-3 4z" fill="#c4c4c4"/></svg>
            <svg viewBox="0 0 24 32"><path d="M2 4h20v25H2z" fill="none" stroke="#c4c4c4" stroke-width="2"/><path d="M1 3h22v6H1zM5 13h3v2H5zM10 13h10v2H10zM5 18h3v2H5zM10 18h10v2H10zM5 23h3v2H5zM10 23h10v2H10z" fill="#c4c4c4"/></svg>
            <svg viewBox="0 0 28 32"><path d="M0 4h10l5 5h12v19H0z" fill="#c4c4c4"/></svg>
            <svg class="fi"><use href="#plus"/></svg>
            <svg class="fi"><use href="#trash"/></svg>
          </div>
        </section>
      </div>
    </div>
  </section>

  <section class="float">
    <div class="ptabs"><button>내비게이터</button><button>정보</button><button class="on">대지</button><svg class="dr"><use href="#dbl-right"/></svg><i></i><svg class="pm"><use href="#menu"/></svg></div>
    <div class="listbox">
      <table>
        <tr><td>1</td><td>대지 1</td><td><svg><use href="#board"/></svg></td></tr>
        <tr><td>2</td><td>대지 2</td><td><svg><use href="#board"/></svg></td></tr>
        <tr><td>3</td><td>대지 3</td><td><svg><use href="#board"/></svg></td></tr>
        <tr><td>4</td><td>대지 4</td><td><svg><use href="#board"/></svg></td></tr>
        <tr class="on"><td>5</td><td>대지 5</td><td><svg><use href="#board"/></svg></td></tr>
      </table>
    </div>
    <div class="ffoot">
      <svg class="reorder" viewBox="0 0 28 32"><path d="M1 2h8v8H1zM17 2h8v8h-8zM1 20h8v8H1zM17 16l9 8-9 8z" fill="#c4c4c4"/><path d="M8 6h10M21 8L6 22M8 24h12" stroke="#c4c4c4" stroke-width="2.400"/></svg>
      <i class="gap"></i>
      <svg viewBox="0 0 24 28"><path d="M12 2l10 12h-5v12H7V14H2z" fill="#c4c4c4"/></svg>
      <svg viewBox="0 0 24 28"><path d="M12 26l10-12h-5V2H7v12H2z" fill="#757575"/></svg>
      <svg><use href="#plus"/></svg>
      <svg><use href="#trash"/></svg>
    </div>
    <div class="fgrip"><i class="grip"></i></div>
  </section>
</main>

<footer class="taskbar">
  <button class="weather" aria-label="날씨"><svg viewBox="0 0 56 56"><path d="M11 52C-3 50-2 32 9 31c2-16 24-16 27 1 14 1 14 19 0 20z" fill="url(#cloud)"/><circle cx="38" cy="17" r="16" fill="#ff949c"/><text x="38" y="25" text-anchor="middle" font-size="22" fill="#111">4</text></svg></button>
  <div class="apps">
    <button aria-label="시작"><svg viewBox="-24 -24 48 48"><path d="M-23-22H-1V-1H-23zM1-22H23V-1H1zM-23 1H-1V23H-23zM1 1H23V23H1z" fill="url(#win)"/></svg></button>
    <button aria-label="검색"><svg viewBox="-24 -24 48 48"><circle cx="-3" cy="-4" r="17" fill="#3c4660" stroke="#e8eaee" stroke-width="4"/><path d="M10 9l10 11" stroke="#d8dae0" stroke-width="5" stroke-linecap="round"/></svg></button>
    <button aria-label="작업 보기"><svg viewBox="-24 -24 48 48"><rect x="-12" y="-22" width="36" height="32" rx="2" fill="#f2f2f2"/><rect x="-24" y="-10" width="36" height="32" rx="2" fill="#6e6e6e"/><path d="M-12-10h24v20h-24z" fill="#a8a8a8"/></svg></button>
    <button class="run" aria-label="탐색기"><svg viewBox="-24 -24 48 48"><path d="M-24-20h16l5 5h26v10h-47z" fill="#e0a112"/><rect x="-24" y="-15" width="48" height="37" rx="2" fill="url(#fold)"/><path d="M-15 22V12q0-4 4-4h22q4 0 4 4v10z" fill="#1273c8"/><path d="M-9 15H9" stroke="#0a4c8c" stroke-width="2"/></svg></button>
    <button aria-label="스토어"><svg viewBox="-24 -24 48 48"><path d="M-13-14v-6q0-3 3-3h20q3 0 3 3v6" fill="none" stroke="#29a4ee" stroke-width="3.400"/><path d="M-23-17h46v32q0 8-8 8h-30q-8 0-8-8z" fill="#f2f2f2"/><path d="M-10-7h9v9h-9z" fill="#f25022"/><path d="M1-7h9v9H1z" fill="#7fba00"/><path d="M-10 4h9v9h-9z" fill="#00a4ef"/><path d="M1 4h9v9H1z" fill="#ffb900"/></svg></button>
    <button class="run" aria-label="카카오톡"><svg viewBox="-24 -24 48 48"><rect x="-24" y="-24" width="48" height="47" rx="6" fill="#f9e000"/><path d="M0-16c-12 0-18 7-18 15 0 5 3 9 8 12l-2 7 9-6c13 1 21-5 21-13S12-16 0-16z" fill="#371d1e"/><text y="4" text-anchor="middle" font-size="11" font-weight="700" fill="#f9e000">TALK</text></svg></button>
    <button aria-label="설정"><svg viewBox="-24 -24 48 48"><rect x="-24" y="-24" width="47" height="47" rx="5" fill="#8f7bff"/><path d="M-15-15h30v29h-30zM-7-8V7M0-8V7M7-8V7" fill="none" stroke="#fff" stroke-width="2"/><path d="M-9 1h4M-2 4h4M5-2h4" stroke="#fff" stroke-width="3"/></svg></button>
    <button aria-label="메모장"><svg viewBox="-24 -24 48 48"><rect x="-18" y="-21" width="36" height="44" rx="3" fill="url(#note)"/><path d="M-18 16h36v3h-36z" fill="#e8e8e8"/><path d="M-18 19h36v4h-36z" fill="#b25a18"/><path d="M-12-24v5M-4-24v5M4-24v5M12-24v5" stroke="#0b6f8e" stroke-width="3"/><path d="M-11-9h22M-11-1h22M-11 7h22" stroke="#0b6f8e" stroke-width="3"/></svg></button>
    <button aria-label="Edge"><svg viewBox="-24 -24 48 48"><circle r="24" fill="#0f7fd6"/><path d="M-23-4C-20-32 24-30 24 0 24 9 16 12 9 9 3 6 9 4 9-3 8-14-10-18-23-4z" fill="url(#edge)"/><path d="M-8 0C-14 18 6 26 20 13 16 20 8 24 0 24-16 20-18 6-8 0z" fill="#0c4fa3"/></svg></button>
    <button class="run" aria-label="Chrome"><svg viewBox="-24 -24 48 48"><circle r="24" fill="#fbc116"/><path d="M0-24A24 24 0 0 1 21-12H0A12 12 0 0 0-11 5L-21-12A24 24 0 0 1 0-24z" fill="#e33b2e"/><path d="M-21-12L-10 6A12 12 0 0 0 5 11L-2 24A24 24 0 0 1-21-12z" fill="#2b9846"/><circle r="12" fill="#fff"/><circle r="9.500" fill="#3a7cec"/></svg></button>
    <button class="run" aria-label="Notion"><svg viewBox="-24 -24 48 48"><path d="M-19-16l4-3 28-1 6 6v30l-5 4-28 1-5-6z" fill="#fff" stroke="#111" stroke-width="2"/><path d="M-19-16l6 6 31-1v27M-13-10v30" fill="none" stroke="#111" stroke-width="2.500"/><text x="3" y="14" text-anchor="middle" font-family="Liberation Serif, serif" font-weight="700" font-size="27">N</text></svg></button>
    <button aria-label="Creative Cloud"><span class="cc"><svg viewBox="-20 -20 40 40"><path d="M10-8A11 11 0 0 0-5-9C-19-5-17 13-5 13H4A11 11 0 0 0 10-8zM4 6L-4-2a5 5 0 0 0-6 8q3 2 6 0M0 0A6 6 0 1 1 4 6" fill="none" stroke="#fff" stroke-width="3.400" stroke-linecap="round"/></svg></span></button>
    <button class="active" aria-label="Illustrator"><span class="aibig">Ai</span></button>
    <button aria-label="휴대폰 연결"><svg viewBox="-24 -24 48 48"><path d="M-21-21h42v31h-42z" fill="#1a86d6"/><path d="M-23 9h46v3h-46z" fill="#114e86"/><path d="M-15 12H7v9h-22z" fill="#114e86"/><path d="M-15-16H7V0h-22z" fill="#3cc6f8"/><path d="M-15 0H7v6h-22z" fill="#1d9fe6"/><path d="M-15 6H7v10h-22z" fill="#066ac4"/><path d="M-15-16H7v5h-22z" fill="#5fe6ff"/><path d="M-8-13h9" stroke="#124f86" stroke-width="2"/></svg></button>
    <button aria-label="Word"><svg viewBox="-24 -24 48 48"><rect x="-23" y="-23" width="46" height="46" rx="4" fill="#7a5af8"/><path d="M0-23h7v46H0z" fill="#2f0d78"/><path d="M7-23h8v46H7z" fill="#4c12d0"/><text x="-12" y="-4" text-anchor="middle" font-size="19" fill="#fff">W</text></svg></button>
    <button aria-label="원격 데스크톱"><svg viewBox="-24 -24 48 48"><path d="M-16-18h36v26h-36z" fill="#f2f2f2" stroke="#8a8a8a" stroke-width="2.500"/><path d="M-22-9h36v27h-36z" fill="#f2f2f2" stroke="#8a8a8a" stroke-width="2.500"/><path d="M-16 17v-4l3-8 8 12z" fill="#1fa35a"/><path d="M-14 5a11 11 0 0 1 21 3h-11l-6 3z" fill="#dd4b3e"/><path d="M-2 8H7q2 4 1 9h-7z" fill="#fbc849"/><path d="M-9 17v-4a5 5 0 0 1 10 0v4z" fill="#4a86e8" stroke="#fff" stroke-width="1.500"/></svg></button>
    <button aria-label="교보 전자도서관"><svg viewBox="-24 -24 48 48"><rect x="-24" y="-24" width="48" height="48" rx="4" fill="#45b035"/><path d="M-24 8H0v16h-20q-4 0-4-4z" fill="#d8d8d8"/><path d="M0 8h24v12q0 4-4 4H0z" fill="#fff"/><path d="M16 8h4v7l-2-2-2 2z" fill="#45b035"/><path d="M-2-16q4-3 5 0 0 4-4 4z" fill="#fff"/><text y="-6" text-anchor="middle" font-size="6" fill="#fff">KYOBO</text><text y="2" text-anchor="middle" font-size="7" fill="#fff">전자도서관</text></svg></button>
    <button aria-label="스티커 메모"><svg viewBox="-24 -24 48 48"><path d="M-21-21h42v42h-42z" fill="#ffd60a"/><path d="M21 0v21H1z" fill="#f0aa00"/><path d="M0 0h21L0 21z" fill="#3b3b3b"/></svg></button>
    <button aria-label="보이스"><svg viewBox="-24 -24 48 48"><rect x="-24" y="-24" width="48" height="48" rx="12" fill="url(#pur)"/><g fill="none" stroke="#fff" stroke-width="2.500"><path d="M0-14h-13q-4 0-4 4V9q0 4 4 4H0"/><rect x="0" y="-14" width="17" height="28" rx="8"/><path d="M9-7v5"/></g><path d="M-12-8h3v3h-3zM-6-8h3v3h-3zM-12-2h7v3h-7zM-12 4h3v3h-3zM-6 4h3v3h-3z" fill="#fff"/></svg></button>
  </div>
  <div class="tray">
    <svg viewBox="-16 -18 32 36"><path d="M-10 5L0-6 10 5" fill="none" stroke="#fff" stroke-width="2.400"/></svg>
    <svg viewBox="-16 -18 32 36"><path d="M-14-1A15 15 0 0 1 13-8M14-16v9H6M-14 15V7h7M-14 7q2 7 10 8" fill="none" stroke="#fff" stroke-width="2.200"/><circle cx="8" cy="8" r="8" fill="#ff9a0a"/></svg>
    <svg viewBox="-16 -18 32 36"><path d="M-12 15L0-15 12 15M-8 5H8" fill="none" stroke="#fff" stroke-width="2.200"/></svg>
    <div class="trio3">
      <svg viewBox="-16 -18 32 36"><path d="M-15-5q15-13 30 0M-10 1Q0-8 10 1M-6 6q6-5 12 0" fill="none" stroke="#fff" stroke-width="2.400"/><circle cy="9" r="3" fill="#fff"/></svg>
      <svg viewBox="-16 -18 32 36"><path d="M-15-5h6l7-6v22l-7-6h-6zM4-4l10 9M14-4L4 5" fill="none" stroke="#fff" stroke-width="2"/></svg>
      <svg viewBox="-16 -18 32 36"><path d="M-6-9h16v17h-24V-4" fill="none" stroke="#fff" stroke-width="2.400"/><path d="M-8-6h14L2 6h-14zM-12-15l-4 10h4l-1 8 7-11h-4l1-7zM10 16l-7-7q-1-5 3-5 3 0 4 3 1-3 4-3 4 1 2 6z" fill="#fff"/></svg>
    </div>
    <time>오전 9:46<br>2025-01-16</time>
    <svg viewBox="-16 -18 32 36"><path d="M-10-4q1-9 9-10 10 2 10 12l3 9h-25z" fill="#fff"/><path d="M-6 11H6q-6 6-12 0z" fill="#fff"/><path d="M-5-4h7l-7 8h7" fill="none" stroke="#1c222e" stroke-width="2.400"/><path d="M5-13h8l-8 8h8" fill="none" stroke="#fff" stroke-width="2.400"/></svg>
  </div>
</footer>
</body>
</html>
```
FILE: styles.css
```css
* { box-sizing: border-box; }
body {
  margin: 0;
  height: 100vh;
  display: flex;
  flex-direction: column;
  overflow: hidden;
  background: #535353;
  color: #e4e4e4;
  font: 22px/28px "Noto Sans", "Noto Sans CJK KR", sans-serif;
}
button, input, select {
  font: inherit;
  color: inherit;
  margin: 0;
  padding: 0;
  border: 0;
  background: none;
  outline: 0;
}
svg { display: block; flex: none; }
i { display: block; flex: none; }
.sprite { position: absolute; width: 0; height: 0; }
.gap { flex: 1; }
.flip { transform: scaleX(-1); }

/* menu bar */
.menubar {
  display: flex;
  align-items: center;
  height: 62px;
  border-bottom: 2px solid #383838;
  font-size: 26px;
}
.ai-logo {
  width: 33px;
  height: 30px;
  margin-left: 20px;
  border-radius: 6px;
  background: #330000;
  color: #ff9a00;
  font: bold 17px/30px "Noto Sans", sans-serif;
  text-align: center;
}
.home { width: 36px; margin-left: 27px; }
.home svg { width: 36px; height: 32px; }
.menus {
  display: flex;
  gap: 27px;
  height: 40px;
  margin-left: 29px;
  padding: 0 26px 0 32px;
  border-left: 2px solid #5f5f5f;
  border-right: 2px solid #5f5f5f;
}
.menus button { white-space: nowrap; padding-bottom: 2px; }
.menu-right { display: flex; align-items: center; margin-left: auto; height: 60px; }
.share {
  width: 88px;
  height: 48px;
  border-radius: 24px;
  background: #1473e6;
  color: #fff;
  font-size: 24px;
}
.ic svg { width: 36px; height: 36px; }
.ic { display: flex; align-items: center; margin-left: 26px; }
.bell { margin-left: 20px; }
.vline { width: 2px; height: 40px; margin: 0 14px 0 26px; background: #5f5f5f; }
.vline + .ic { margin-left: 26px; }
.vline + .ic + .ic { margin-left: 32px; }
.winbtns {
  display: flex;
  align-self: flex-start;
  width: 168px;
  height: 38px;
  margin: 0 7px 0 24px;
  border: 2px solid #606060;
  border-top: 0;
  border-radius: 0 0 6px 6px;
}
.winbtns button { flex: 1; display: grid; place-items: center; }
.winbtns button + button { border-left: 2px solid #606060; }
.winbtns svg { width: 30px; height: 30px; }

/* control bar */
.controlbar {
  display: flex;
  align-items: center;
  height: 68px;
  border-bottom: 2px solid #383838;
  border-left: 2px solid #383838;
}
.controlbar .lbl { margin-left: 24px; white-space: nowrap; color: #d2d2d2; }
.controlbar .dim { color: #b2b2b2; margin-left: 10px; }
.under { border-bottom: 2px dotted #b8b8b8; line-height: 26px; }
.dots { width: 4px; height: 38px; margin-left: 9px; background: repeating-linear-gradient(#383838 0 2px, transparent 2px 4px); }
.sel-none { width: 173px; margin-left: 16px; padding-bottom: 2px; color: #b2b2b2; }
.vdiv { width: 2px; height: 50px; background: #4a4a4a; }
.vdiv.tall { height: 62px; margin-left: 12px; }
.pick {
  display: flex;
  align-items: center;
  width: 78px;
  height: 42px;
  margin-left: 10px;
  border: 2px solid #606060;
  border-radius: 4px;
  background: #464646;
}
.pick svg { width: 20px; height: 20px; margin-left: 9px; color: #fff; }
.chip { width: 38px; height: 38px; background: #fff; }
.chip.pale { background: #e3e3e3; }
.chip.stroke { border: 2px solid #e8e8e8; background: linear-gradient(#fff, #fff) center / 6px 8px no-repeat, linear-gradient(#050202, #050202) center / 10px 12px no-repeat, linear-gradient(#fff, #fff) center / 14px 16px no-repeat, #050202; }
.combo {
  appearance: none;
  height: 42px;
  padding-left: 5px;
  border: 2px solid #606060;
  border-radius: 4px;
  color: #fff;
  font-size: 20px;
  background: url("data:image/svg+xml,%3Csvg xmlns='http://www.w3.org/2000/svg' width='34' height='38'%3E%3Cpath d='M0 0h2v38H0z' fill='%23606060'/%3E%3Cpath d='M2 0h32v38H2z' fill='%234a4a4a'/%3E%3Cpath d='M11 16l7 6 7-6' fill='none' stroke='%23fff' stroke-width='2.4'/%3E%3C/svg%3E") right center no-repeat #464646;
}
.spin { display: flex; height: 42px; margin-left: 9px; }
.arrows { width: 36px; border: 2px solid #606060; border-right: 0; border-radius: 4px 0 0 4px; display: grid; place-items: center; background: #4a4a4a; }
.arrows svg { width: 20px; height: 32px; }
.w-pt { width: 126px; border-radius: 0 4px 4px 0; }
.profile { display: flex; align-items: center; justify-content: flex-end; width: 218px; height: 42px; margin-left: 12px; padding-right: 8px; color: #757575; background: linear-gradient(#808080, #808080) 0 0 / 180px 42px no-repeat, #575757; }
.profile svg { width: 20px; height: 20px; }
.w-brush { width: 211px; margin-left: 11px; padding-left: 14px; color: #222; background-color: #e3e3e3; }
.controlbar .w-brush + .lbl { margin-left: 14px; }
.opacity { display: flex; width: 140px; height: 42px; margin-left: 11px; border: 2px solid #606060; border-radius: 4px; background: #464646; }
.opacity input { flex: 1; min-width: 0; padding-left: 4px; color: #fff; font-size: 20px; }
.opacity button { display: grid; place-items: center; width: 36px; border-left: 2px solid #606060; background: #4a4a4a; color: #fff; }
.opacity svg { width: 20px; height: 20px; }
.pick + .vdiv { margin-left: 10px; }
.outline { width: 130px; height: 38px; margin-left: 10px; border: 2px solid #757575; border-radius: 4px; white-space: nowrap; line-height: 30px; color: #f2f2f2; }
.simil { margin-left: 18px; color: #fff; }
.simil .sm { margin-left: 8px; }
.sm, .ic .sm { width: 20px; height: 20px; }
.gen { margin-left: 28px; }
.gen svg { width: 40px; }
.ctl-right { display: flex; align-items: center; margin-left: auto; margin-right: 35px; }
.ctl-right svg { width: 32px; height: 32px; margin-right: 20px; }
.ctl-right .sm { width: 20px; height: 20px; margin: 0 34px 0 -8px; color: #757575; }
.ctl-right .lst { width: 24px; height: 24px; margin: 0; }

/* work area */
.work { position: relative; flex: 1; min-height: 0; display: flex; gap: 2px; }
.strip-head { display: flex; align-items: center; height: 24px; background: #424242; border-bottom: 2px solid #383838; color: #c4c4c4; flex: none; }
.strip-head svg { width: 14px; height: 14px; }
.grip { height: 8px; width: 38px; background: repeating-linear-gradient(90deg, #383838 0 2px, transparent 2px 4px); }

/* tools */
.tools { display: flex; flex-direction: column; flex: none; width: 144px; border: 2px solid #383838; border-top: 0; }
.strip-head.left { padding-left: 12px; }
.tools > .grip { margin: 6px 0 0 50px; }
.toolgrid { display: grid; grid-template-columns: 60px 60px; grid-auto-rows: 48px; margin: 24px 10px 0; padding-bottom: 4px; border-bottom: 2px solid #4a4a4a; }
.toolgrid button { position: relative; }
.toolgrid svg { width: 60px; height: 48px; position: relative; }
.toolgrid .on { background: #303030; background-clip: content-box; padding: 2px; }
.toolgrid .on svg { margin: -2px; }
.fly::after { content: ""; position: absolute; right: 4px; bottom: 4px; width: 7px; height: 7px; background: #c4c4c4; clip-path: polygon(100% 0, 100% 100%, 0 100%); }
.colors svg { width: 120px; height: 112px; margin: 6px 0 0 10px; }
.seg { display: flex; border: 2px solid #606060; border-radius: 6px; overflow: hidden; }
.seg button { flex: 1; display: grid; place-items: center; }
.seg button + button { border-left: 2px solid #606060; }
.seg .on { background: #303030; }
.tools .seg { width: 118px; margin-left: 10px; flex: none; }
.tools .c1 { height: 42px; margin-top: 10px; }
.tools .c2 { height: 38px; margin-top: 8px; }
.c1 svg { width: 26px; height: 26px; }
.c2 svg { width: 22px; height: 22px; }
.screen { width: 44px; margin: 16px 0 0 48px; }
.screen svg { width: 44px; height: 32px; }
.more { width: 30px; margin: 44px 0 0 55px; }
.more svg { width: 30px; height: 8px; fill: #c4c4c4; }

/* document */
.doc { flex: 1; min-width: 0; display: flex; flex-direction: column; border: 2px solid #383838; border-top: 0; }
.tabs { height: 58px; background: #424242; border-bottom: 2px solid #383838; display: flex; flex: none; }
.doctab { display: flex; align-items: center; width: 498px; padding: 0 0 2px 20px; background: #535353; border-right: 2px solid #383838; font-size: 25px; white-space: nowrap; }
.doctab button { margin: 4px 0 0 auto; padding-right: 13px; }
.doctab svg { width: 14px; height: 14px; }
.docbody { flex: 1; min-height: 0; display: flex; }
.canvascol { flex: 1; display: flex; flex-direction: column; }
.canvas { flex: 1; min-height: 0; display: grid; grid-template: 482px 482px / 482px 482px; gap: 192px 193px; padding: 121px 0 0 377px; background: #5f5f5f; }
.canvas i { background: #fff; box-shadow: 0 0 0 1px #4a4a4a, 2px 2px 2px #4a4a4a; }
.hint { display: flex; align-items: center; gap: 8px; height: 50px; margin: 0; padding: 0 0 4px 10px; border-top: 2px solid #4b4b4b; color: #c4c4c4; white-space: nowrap; flex: none; font-size: 22px; }
.hint svg { width: 28px; height: 28px; margin-right: 14px; }
.vscroll { display: flex; flex-direction: column; align-items: center; width: 32px; padding: 18px 0 8px; background: #4b4b4b; color: #9a9a9a; }
.vscroll .thumb { width: 32px; height: 52px; margin: auto 0; border-radius: 16px; background: #606060; }
.vscroll svg { width: 20px; height: 20px; }
.status { display: flex; height: 32px; padding-left: 5px; overflow: hidden; flex: none; }
.status .combo { height: 46px; margin: 1px 6px 0 0; padding-bottom: 2px; }
.w-zoom { width: 140px; }
.w-page { width: 120px; }
.nav { width: 34px; display: grid; place-items: center; fill: #c4c4c4; }
.nav svg { width: 20px; height: 20px; }
.off { fill: #757575; }
.nav + .w-page { margin-left: 6px; }
.toolname { width: 402px; margin-left: 9px; border: 2px solid #4a4a4a; border-width: 0 2px; text-align: center; font-size: 20px; line-height: 36px; color: #c4c4c4; }
.hscroll { flex: 1; display: flex; align-items: center; justify-content: space-between; margin-right: 32px; padding: 0 8px; background: #4b4b4b; color: #9a9a9a; }
.hscroll svg { width: 20px; height: 20px; }
.hscroll .thumb { width: 50px; height: 30px; border-radius: 15px; background: #606060; }

/* side columns */
.side { display: flex; flex-direction: column; flex: none; width: 654px; }
.heads { display: grid; grid-template-columns: 80px 80px 1fr; justify-items: end; border-left: 2px solid #383838; border-right: 2px solid #383838; }
.heads svg { margin-right: 16px; }
.heads .flip { margin-right: 12px; }
.cols { flex: 1; display: flex; gap: 2px; min-height: 0; }
.col { border: 2px solid #383838; border-top: 0; width: 78px; flex: none; }
.col.panels { flex: 1; display: flex; flex-direction: column; }
.grp { padding: 6px 0 4px; border-bottom: 2px solid #383838; display: flex; flex-direction: column; align-items: center; }
.grp .grip { margin-bottom: 5px; }
.grp button { width: 56px; height: 56px; display: block; }
.grp button:last-child { margin-bottom: 1px; }
.grp svg { width: 56px; height: 56px; }
.grp button.on { height: 48px; margin: 4px 0 5px; border-radius: 6px; background: #383838; border: 2px solid #606060; }
.grp .on svg { margin: -6px -2px; }
.ptabs { display: flex; background: #424242; box-shadow: inset 0 -2px #383838; flex: none; font-size: 26px; }
.ptabs button { border-right: 2px solid #383838; color: #a0a0a0; white-space: nowrap; }
.ptabs .on { background: #535353; color: #f2f2f2; }
.pm { width: 20px; height: 16px; margin: 20px 12px auto auto; color: #b4b4b4; }
.ptabs .color { display: flex; align-items: center; gap: 12px; width: 98px; height: 62px; padding: 0 0 14px 8px; }
.ptabs .color svg { width: 12px; height: 18px; margin-top: 12px; }
.colorbody { display: flex; justify-content: space-between; padding: 4px 32px 0 10px; }
.csel .row { display: flex; gap: 17px; }
.csel .row svg { width: 24px; height: 24px; }
.fs { width: 60px; height: 60px; margin-top: 12px; }
.sliders { display: grid; grid-template-columns: 24px 222px 72px 20px; grid-auto-rows: 50px; align-items: center; column-gap: 6px; color: #c4c4c4; text-align: center; }
.sliders input:not(.rg), #hex { height: 42px; border: 2px solid #606060; border-radius: 5px; background: #464646; color: #fff; padding-left: 7px; width: 100%; }
.rg { appearance: none; width: 222px; height: 26px; margin-top: 11px; background: linear-gradient(90deg, #fff, var(--c)) 10px 3px / 202px 7px no-repeat, linear-gradient(#606060, #606060) 8px 1px / 206px 11px no-repeat; }
.rg::-webkit-slider-thumb { appearance: none; width: 18px; height: 16px; margin-top: 10px; background: #c4c4c4; clip-path: polygon(50% 0, 100% 45%, 100% 100%, 0 100%, 0 45%); }
.c { --c: #00b0f0 68%, #00a0e8; }
.m { --c: #e4007f 95%; }
.y { --c: #ffec00 88%; }
.k { --c: #231815; }
.hexrow { display: flex; align-items: center; padding: 10px 32px 0 10px; }
.trio { display: flex; gap: 2px; padding: 2px; background: #2e2e2e; margin-right: auto; }
.trio svg, .trio i { width: 24px; height: 24px; }
.bk { background: #050202; }
.wh { background: #fff; }
.hexrow label { margin-right: 12px; }
.hexrow #hex { width: 130px; }
.spectrum { display: grid; height: 378px; margin: 12px 34px 12px 12px; border: 2px solid #2e2e2e; }
.spectrum i { grid-area: 1 / 1; isolation: isolate; }
.s1 { background: linear-gradient(#fff, rgba(255,255,255,0) 50%), linear-gradient(90deg, #e8141a, #ee6f10 7%, #f4a81c 12%, #f0ea30 16%, #8cc41e 25%, #6ab72d 34%, #78c07a 43%, #6fc6d2 50%, #1eb4ec 54%, #1f66b4 60%, #1c479b 67%, #6a4a9a 76%, #a8529a 84%, #e8208a 91%, #e8101a); }
.s2 { background: linear-gradient(90deg, #a51e24, #b87010 11%, #b0b512 17%, #2aae35 29%, #1eac3a 38%, #14b08a 46%, #1aa8b0 51%, #0a6ab0 56%, #00358f 63%, #1a2a85 68%, #5a2a8c 76%, #983a90 83%, #a8008a 88%, #a51e24); mask-image: linear-gradient(transparent 50%, #000 64%); }
.s3 { background: linear-gradient(90deg, #6a1414, #5c4a1c 12%, #6a6a2c 17%, #167a38 29%, #0e7038 40%, #006068 51%, #0a3a70 57%, #1e2c58 66%, #2e2a5c 76%, #6c1a66 84%, #701428 93%, #6a0c10); mask-image: linear-gradient(transparent 64%, #000 78%); }
.s4 { background: linear-gradient(90deg, #380000, #2a1a08 10%, #34340f 17%, #12381c 35%, #123a2c 47%, #00242e 56%, #0a1230 67%, #301844 84%, #3a0006); mask-image: linear-gradient(transparent 76%, #000 90%); }
.s5 { background: linear-gradient(rgba(7,2,3,0) 84%, #070203 98%); }
.swpanel { flex: 1; display: flex; flex-direction: column; border-top: 6px double #383838; }
.swpanel .ptabs button, .float .ptabs button { height: 54px; padding: 0 16px 8px 19px; }
.swtop { display: flex; padding: 12px 10px 0; height: 84px; }
.swtop .fs { margin: 0; }
.find { width: 52px; height: 52px; margin: 10px 10px 0 auto; border: 2px solid #757575; border-radius: 5px; background: #464646; }
.find svg { width: 48px; height: 48px; }
.c3 { width: 98px; height: 52px; margin-top: 10px; }
.c3 svg { width: 28px; height: 32px; }
.swlist { flex: 1; display: flex; justify-content: space-between; margin: 0 10px; border: 2px solid #606060; }
.swbar { display: flex; flex-direction: column; justify-content: space-between; padding: 3px 5px; color: #5e5e5e; }
.swbar svg { width: 20px; height: 20px; }
.swbar .up { transform: scaleY(-1); }
.sw { display: grid; grid-template-columns: repeat(15, 26px); grid-auto-rows: 26px; gap: 2px; }
.sw svg { width: 26px; height: 26px; }
.group { margin-top: 6px; }
.gr1 { background: linear-gradient(90deg, #fff, #555 60%, #000); }
.gr2 { background: linear-gradient(90deg, #d4e2f4, #2a94d0 60%, #0e64ae); }
.gr3 { background: linear-gradient(90deg, #ef74a4, rgba(239,116,164,.1)), repeating-conic-gradient(#ccc 0 25%, #fff 0 50%) 0 0 / 8px 8px; }
.gr4 { background: radial-gradient(#ffeedc, #f4912c 60%); }
.swfoot { display: flex; align-items: center; gap: 24px; height: 39px; padding: 0 55px 0 19px; flex: none; }
.swfoot svg { width: 32px; height: 32px; }
.swfoot .fi { width: 24px; height: 28px; }

/* floating panel */
.float { position: absolute; right: 573px; top: 18px; width: 485px; background: #535353; border: 2px solid #383838; border-top: 8px solid #323232; box-shadow: -6px 2px 10px rgba(0,0,0,.2); }
.float .ptabs i { width: 2px; height: 22px; margin: auto 0; background: #a0a0a0; }
.float .pm { margin-left: 14px; }
.dr { width: 22px; height: 22px; margin: auto 13px auto auto; color: #d0d0d0; }
.listbox { height: 264px; margin: 12px 10px 0; border: 2px solid #606060; border-radius: 4px; }
table { width: 100%; border-collapse: collapse; color: #e4e4e4; }
td { height: 38px; padding: 0 0 0 10px; border-bottom: 2px solid #606060; border-right: 2px solid #606060; line-height: 32px; }
td:first-child { width: 82px; color: #fff; font-size: 24px; }
td:last-child { width: 82px; padding-left: 12px; border-right: 0; }
td svg { width: 26px; height: 30px; }
tr.on { background: #50667c; }
.ffoot { display: flex; align-items: center; gap: 28px; height: 38px; padding: 0 55px 0 23px; }
.ffoot svg { width: 24px; height: 28px; }
.ffoot .reorder { width: 28px; height: 32px; }
.fgrip { display: grid; place-items: center; height: 16px; border-top: 2px solid #383838; }

/* taskbar */
.taskbar {
  display: flex;
  align-items: center;
  height: 96px;
  flex: none;
  color: #fff;
  background: linear-gradient(90deg, #1b2229 0, #1a2230 20%, #111f5c 24%, #10205e 27%, #13224c 30%, #12205a 42%, #151f3c 44%, #1c2030 52%, #1a2238 55%, #10205a 59%, #16203a 63%, #1f2124 67%, #202124 70%, #1a222e 75%, #1c222c);
  border-top: 2px solid #434550;
}
.weather { margin-left: 40px; padding-bottom: 10px; }
.weather svg { width: 56px; height: 56px; }
.apps { display: flex; flex: none; margin-left: 415px; padding-bottom: 2px; }
.apps button { position: relative; width: 88px; height: 80px; display: grid; place-items: center; }
.apps svg { width: 48px; height: 48px; }
.run::after, .active::after { content: ""; position: absolute; bottom: 1px; left: 39px; width: 10px; height: 6px; border-radius: 3px; background: #9a9eb0; }
.apps .active { width: 80px; margin: 0 4px; border-radius: 8px; background: rgba(255,255,255,.09); }
.active::after { left: 24px; width: 32px; background: #4cc2ff; }
.aibig { width: 42px; height: 41px; border-radius: 7px; background: #330000; color: #ff9a00; font: bold 22px/41px "Noto Sans", sans-serif; }
.cc { width: 42px; height: 41px; border-radius: 8px; background: conic-gradient(#f41010, #ff8a10 80deg, #b4d420 115deg, #4cd44a 140deg, #a8c8a0 180deg, #3a80f0 225deg, #b45af0 265deg, #ff30c0 310deg, #f41010); display: grid; place-items: center; }
.cc svg { width: 36px; height: 36px; }
.tray { display: flex; align-items: center; gap: 32px; margin-left: auto; margin-right: 42px; }
.tray svg { width: 32px; height: 36px; }
.trio3 { display: flex; gap: 15px; }
.tray time { margin-right: -18px; padding-bottom: 4px; text-align: right; font-size: 24px; line-height: 32px; }
```
